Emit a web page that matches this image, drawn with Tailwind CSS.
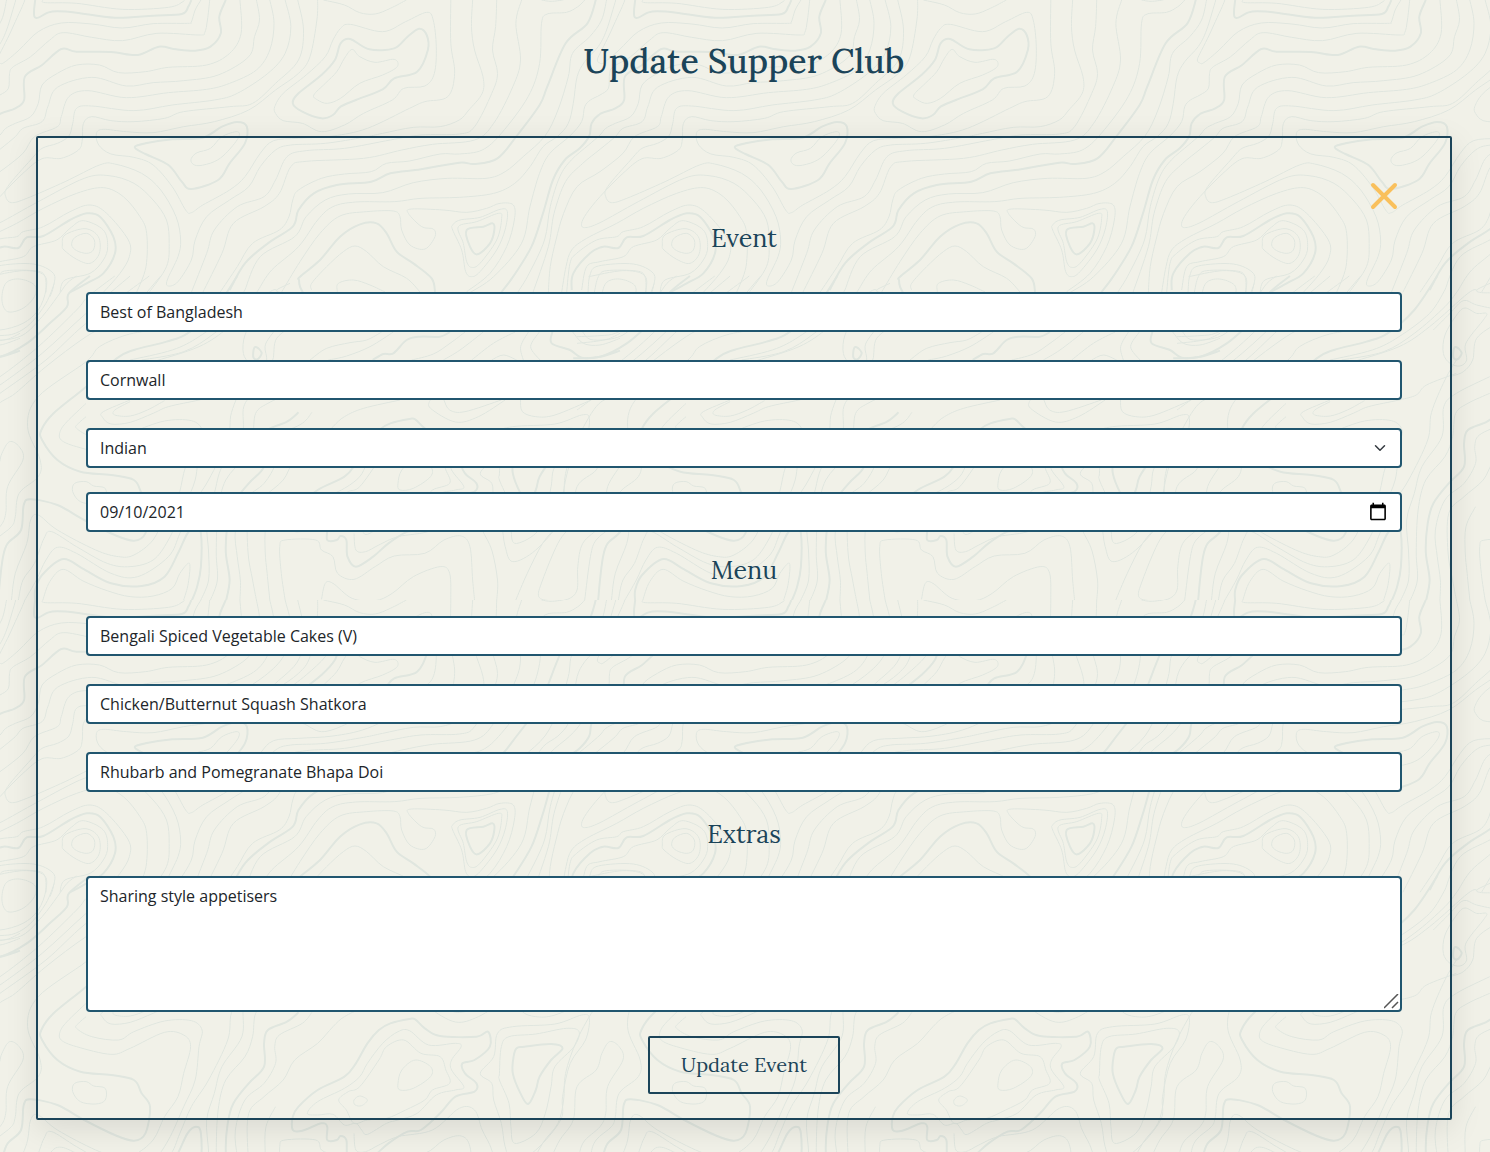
<!DOCTYPE html>
<html lang="en">
<head>
<meta charset="utf-8">
<meta name="viewport" content="width=device-width, initial-scale=1">
<title>Update Supper Club</title>
<script src="https://cdn.jsdelivr.net/npm/@tailwindcss/browser@4"></script>
</head>
<body class="relative min-h-screen bg-[#f1f1e8] font-['Open_Sans',sans-serif] text-base text-[#212529]">

<!-- Topographic contour background, repeated every 600px -->
<svg class="absolute inset-0 -z-0 h-full w-full" aria-hidden="true">
  <defs>
    <pattern id="topo" width="600" height="600" patternUnits="userSpaceOnUse">
      <g id="tile" fill="none" stroke="#e0e6df"></g>
      <use href="#tile" x="600"/>
      <use href="#tile" x="-600"/>
    </pattern>
  </defs>
  <rect width="100%" height="100%" fill="url(#topo)"/>
</svg>

<main class="relative flex flex-col pb-8 pl-9 pr-[38px] pt-9">
  <h1 class="text-center font-['Lora','Liberation_Serif',serif] text-[34px] font-medium leading-[50px] text-[#1b4459]">Update Supper Club</h1>

  <form class="mt-[50px] flex flex-col rounded-xs border-2 border-[#1b4459] px-12 pb-6 pt-10 shadow-[0_8px_32px_rgba(0,0,0,0.1)]">
    <a href="#" aria-label="Close" class="mr-1 self-end">
      <svg class="size-7 m-1 mr-0" viewBox="0 0 28 28" fill="none" stroke="#f9c05c" stroke-width="4" stroke-linecap="round"><path d="M3 3l22 22M25 3L3 25"/></svg>
    </a>
    <h2 class="mt-1.5 text-center font-['Lora','Liberation_Serif',serif] text-[25px] leading-9 text-[#1b4459]">Event</h2>

    <div class="mt-9 flex flex-col gap-7">
      <input type="text" aria-label="Event name" value="Best of Bangladesh" class="h-10 w-full rounded border-2 border-[#21566f] bg-white px-3">
      <input type="text" aria-label="Location" value="Cornwall" class="h-10 w-full rounded border-2 border-[#21566f] bg-white px-3">
      <div class="relative flex">
        <select aria-label="Cuisine" class="h-10 w-full appearance-none rounded border-2 border-[#21566f] bg-white px-3"><option>Indian</option></select>
        <svg class="pointer-events-none absolute right-4 top-3.5 size-3" viewBox="0 0 16 16" fill="none" stroke="#343a40" stroke-width="2" stroke-linecap="round" stroke-linejoin="round" aria-hidden="true"><path d="M2 5l6 6 6-6"/></svg>
      </div>
    </div>
    <input type="date" aria-label="Date" value="2021-09-10" class="mt-6 h-10 w-full rounded border-2 border-[#21566f] bg-white px-3 [&::-webkit-calendar-picker-indicator]:size-5 [&::-webkit-calendar-picker-indicator]:p-0 [&::-webkit-datetime-edit-day-field]:p-0 [&::-webkit-datetime-edit-month-field]:p-0 [&::-webkit-datetime-edit-year-field]:p-0">

    <h2 class="mt-5 text-center font-['Lora','Liberation_Serif',serif] text-[25px] leading-9 text-[#1b4459]">Menu</h2>
    <div class="mt-7 flex flex-col gap-7">
      <input type="text" aria-label="Starter" value="Bengali Spiced Vegetable Cakes (V)" class="h-10 w-full rounded border-2 border-[#21566f] bg-white px-3">
      <input type="text" aria-label="Main" value="Chicken/Butternut Squash Shatkora" class="h-10 w-full rounded border-2 border-[#21566f] bg-white px-3">
      <input type="text" aria-label="Dessert" value="Rhubarb and Pomegranate Bhapa Doi" class="h-10 w-full rounded border-2 border-[#21566f] bg-white px-3">
    </div>

    <h2 class="mt-6 text-center font-['Lora','Liberation_Serif',serif] text-[25px] leading-9 text-[#1b4459]">Extras</h2>
    <div class="relative mt-6 flex">
      <textarea aria-label="Extras" class="h-34 w-full rounded border-2 border-[#21566f] bg-white px-3 py-1.5 [&::-webkit-resizer]:bg-transparent">Sharing style appetisers</textarea>
      <svg class="pointer-events-none absolute bottom-0.5 right-0.5 size-4" viewBox="0 0 16 16" fill="none" stroke="#555" stroke-width="1.5" aria-hidden="true"><path d="M0 14L14 0M8 14l6-6"/></svg>
    </div>

    <button type="submit" class="mt-6 h-[58px] w-48 self-center rounded-xs border-2 border-[#1b4459] font-['Lora','Liberation_Serif',serif] text-xl text-[#1b4459]">Update Event</button>
  </form>
</main>

<script>
// Contour lines: each group has its origin and axis divisors; "T" marks an index (bold) line, "z" a closed one.
const contours = [
 {x:0, y:0, sx:2.613, sy:3, lines:`
T 92,0 89,30 90,50 100,53 125,38 150,34 200,38 300,53 400,47 475,42 492,20 500,0
t 112,0 118,8 200,10 320,28 440,22 478,5 480,0
t 525,0 510,30 500,66 490,70 400,71 320,84 240,72 160,69 100,95 50,150 10,188 -2,188 -7,180 0,160 20,115 40,65 58,20 65,0
t 548,0 542,60 535,98 520,105 410,100 320,122 240,112 165,98 130,120 80,170 35,200 25,220 22,265 0,285 -25,300 -40,320 -48,365 -79,408 -131,460 -158,520 -183,620 -205,730 -278,830 -343,880
T 1558,-5 1535,70 1478,130 1430,260 1410,315 1350,408 1300,475 1240,492 1200,488 1100,508 1020,520 970,545 880,555 820,580 780,630 765,680 700,730 640,790 600,870
t 1585,0 1572,60 1541,110 1496,160 1485,230 1458,330 1424,408 1367,470 1320,515 1270,535 1170,535 1080,548 1000,578 910,582 850,600 800,650 770,710 680,770 640,870
t 1609,0 1585,90 1563,140 1528,185 1508,230 1498,310 1485,370 1458,408 1419,440 1385,500 1345,550 1290,580 1200,592 1100,595 1030,605 930,606 870,620 830,660 780,740 710,810 675,870
T 590,0 573,50 577,100 550,140 510,152 460,148 415,140 360,165 290,156 200,155 160,147 110,195 65,230 63,300 40,325 0,342 -22,370 -28,408 -53,445 -92,480 -123,540 -149,640 -179,740 -227,830 -258,877
t 627,0 630,100 600,160 540,195 440,202 380,215 310,218 260,195 200,195 150,220 110,255 100,310 80,350 40,370 15,385 0,405 -30,435 -75,480 -105,530 -130,620 -145,720 -185,820 -215,877
t 670,0 678,60 665,110 650,170 570,225 480,242 400,248 330,258 240,232 150,262 125,320 110,365 60,385 40,410 0,448 -45,490 -90,545 -120,640 -135,740 -175,877
t 705,0 716,70 705,150 670,210 600,250 540,268 440,278 330,293 230,272 180,290 160,350 150,380 90,410 60,460 0,515 -60,560 -95,640 -115,720 -130,800 -135,877
t 745,0 760,80 745,160 700,220 620,280 560,300 450,315 350,332 240,318 200,325 190,370 180,408 150,430 110,445 80,480 20,560 15,590 30,608 70,595 170,545 260,495 300,492 370,520 420,570 460,650 472,720 465,770 437,840 440,858 465,845 500,780 510,720 540,650 600,600 650,560 680,500 720,450 760,435 850,430 950,412 1000,400 1080,382 1150,380 1200,360 1225,330 1260,280 1262,230 1240,150 1232,80 1235,0
t 778,0 793,90 780,180 720,250 660,310 600,320 480,335 430,355 350,365 290,362 240,350 218,370 215,420 205,450 160,475 110,476 60,520 0,590 -35,640 -48,670 -40,683 0,668 100,605 220,535 285,527 350,550 400,600 435,660 442,730 435,800 390,877
t 830,0 828,60 810,170 780,220 720,270 650,330 560,365 480,380 400,398 330,395 270,388 252,400 258,435 290,462 350,472 400,495 450,560 485,630 500,638 530,615 600,570 640,530 680,460 715,422 780,415 870,408 960,385 1070,325 1110,305 1170,290 1188,220 1178,130 1178,0
tz 720,340 718,320 740,280 800,225 850,170 870,120 890,85 915,73 1000,95 1060,65 1115,37 1132,60 1140,140 1135,220 1110,258 1055,265 1025,300 950,340 900,375 840,395 790,370 740,362
Tz 765,310 780,280 840,225 875,180 890,130 915,117 965,148 1030,145 1065,110 1095,86 1115,105 1118,150 1090,215 1030,235 1000,268 930,300 890,320 870,345 840,355 790,335
tz 820,285 850,250 880,215 900,175 920,148 940,170 980,187 1030,178 1038,200 1000,225 940,250 890,295 855,310 830,300
t 845,0 900,15 940,38 980,42 1020,25 1062,0
t 1298,0 1295,80 1287,150 1300,220 1285,280 1240,380 1200,402 1100,405 1020,420 900,445 800,452 750,470 720,540 690,590 620,620 560,690 540,760 500,877
t 1363,0 1348,70 1360,180 1340,260 1290,370 1240,420 1130,433 1050,450 950,475 800,484 760,500 730,580 690,620 610,670 580,760 530,877
t 1528,0 1510,20 1480,37 1430,42 1415,70 1410,190 1380,290 1310,400 1260,450 1200,462 1150,462 1070,483 1010,490 970,515 900,522 840,535 780,570 765,600 755,650 730,690 660,730 620,800 575,877
t 1415,0 1440,4 1472,0
Tz 352,442 380,430 450,418 530,413 580,380 620,366 645,380 640,430 600,490 570,540 500,567 475,545 440,495 380,462
tz 500,475 515,458 550,445 580,410 620,395 622,415 590,460 560,485 520,497 502,490
`},
 {x:-110, y:0, sx:3, sy:3, lines:`
tz 545,735 555,712 590,700 613,720 610,750 590,760 560,752
tz 517,735 525,705 585,686 625,710 628,760 600,790 560,778 522,750
t 510,877 525,840 600,820 640,780 653,740 640,690 580,662 540,685 500,720 430,740 400,770 330,785 290,800 275,870
T 245,870 250,820 300,760 340,740 385,744 410,712 460,708 540,660 590,640 630,650 670,710 675,760 640,820 590,850 540,877
t 313,877 325,830 350,812 440,813 465,830 468,877
t 294,877 300,825 325,798 430,792 490,820 490,860 480,890
t 230,877 240,790 260,760 320,720 380,710 400,695 460,680 540,635 600,615 650,640 715,720 718,770 690,820 640,877
t 215,877 228,800 245,750 290,715 380,670 460,625 560,580 640,563 700,590 750,650 770,700 768,800 740,877
`},
 {x:300, y:130, sx:3, sy:3, lines:`
t -55,486 0,395 60,310 120,258 200,245 280,243 300,260 305,300 330,345 375,357 405,320 400,297 365,290 325,250 335,237 430,240 500,247 560,235 600,220 640,225 643,270 620,350 570,430 500,485
tz 458,285 480,270 540,262 600,238 622,245 615,300 590,360 540,425 515,440 497,425 485,360 458,300
tz 475,290 530,275 595,250 605,265 590,330 540,400 515,412 500,395 490,340
Tz 500,300 550,290 578,280 583,300 570,340 532,373 510,350
T 10,490 0,470 -3,450 0,440 60,390 120,320 180,283 230,280 260,310 290,365 340,400 395,445 405,486
t 35,480 35,460 80,410 130,365 165,348 200,365 250,410 320,445 360,486
t 112,486 115,460 160,450 210,465 255,486
t 30,690 80,655 150,638 200,630 245,606
t 85,690 140,678 210,650 280,606
T 218,690 250,672 280,670 320,630 360,620 420,620 450,606
t 335,690 400,672 450,640 495,606
t 430,690 480,660 550,606
t 515,690 580,640 645,606
t 575,690 610,675 650,690
t 670,690 662,650 685,606
t 720,690 692,650 718,606
T 757,606 755,640 810,660 845,683 900,680 960,662
t 818,606 850,640 900,645 960,625
t 848,606 870,628 920,628 960,610
`},
 {x:0, y:180, sx:2.613, sy:3, lines:`
T 620,288 560,390 490,460 435,485 350,510 305,535 225,620 140,700 108,750 110,780 150,840 210,875 290,885 350,900 370,940 392,980 380,1060 350,1082 300,1065 220,1020 150,975 80,958 62,975 55,1050 20,1090 8,1130 0,1200 -5,1265
tz 190,935 195,910 225,905 245,918 275,925 275,960 250,972 210,965
t 225,670 175,725 157,755 160,780 200,800 290,823 340,805 430,757 480,765 498,800 480,880 465,950 430,1010 400,1080 350,1125 310,1130 250,1110 150,1050 100,1005 80,1020 70,1090 40,1180 30,1260
t 225,710 205,730 200,745 240,770 310,780 350,755 430,723 500,722 528,750 520,800 510,900 480,980 440,1080 400,1140 340,1160 280,1150 200,1100 135,1055 115,1075 90,1150 60,1200 48,1260
t 340,660 270,695 268,712 290,732 340,727 400,700 440,680 520,660 565,645 592,615 670,580
t 340,665 300,690 300,705 340,708 385,690 430,662
t 670,540 640,600 605,697 595,780 545,900 500,980 470,1060 440,1130 360,1190 290,1180 200,1120 150,1102 120,1140 95,1200 65,1260
t 757,590 670,640 637,680 632,770 580,860 560,940 540,1020 545,1116 545,1200 525,1260
t 757,640 700,670 668,700 660,770 640,830 590,900 570,990 565,1116 568,1200 550,1260
T 780,697 750,725 700,750 690,790 690,860 650,910 610,970 595,1030 590,1116 600,1200 590,1265
t 815,697 790,730 730,765 718,800 720,850 690,910 640,960 615,1050 620,1130 628,1200 627,1260
t 1045,660 950,685 900,710 870,740 830,790 770,840 740,900 690,950 650,1000 648,1116 660,1200 670,1260
T 92,1265 92,1230 110,1185 165,1137 215,1165 290,1210 370,1218 430,1190 465,1120 490,1060 512,1040 525,1060 525,1160 515,1220 500,1265
t 112,1260 130,1205 165,1168 217,1203 280,1232 340,1250 400,1248 450,1225 470,1180 495,1150 492,1210 480,1260
t 745,1260 735,1180 731,1100 745,1080 825,1080 840,1110 870,1130 882,1180 925,1198 980,1160 1030,1128 1110,1120 1160,1080 1205,1068 1228,1100 1235,1200 1240,1260
t 705,1260 698,1180 693,1116 695,1040 720,980
t 840,1258 850,1210 870,1210 920,1255 980,1262 1025,1240 1080,1190 1150,1160 1175,1180 1178,1260
Tz 1070,717 1020,730 990,750 960,790 930,850 900,890 830,930 780,980 765,1010 765,1050 790,1052 840,1030 855,1040 855,1080 880,1080 890,1068 905,1080 908,1130 930,1160 975,1130 1015,1090 1065,1055 1100,1050 1150,1000 1190,950 1240,935 1245,910 1215,880 1208,850 1240,840 1280,800 1275,755 1245,770 1150,768 1110,745 1085,718
tz 803,1000 830,965 900,925 940,890 960,850 1000,790 1040,755 1070,752 1120,795 1190,790 1205,800 1180,840 1180,870 1212,920 1190,930 1140,945 1090,1000 1040,1020 1010,1030 960,1063 945,1050 930,1030 900,1035 870,1003 830,1005
tz 885,960 910,935 940,920 990,840 1010,800 1055,780 1100,820 1150,830 1165,870 1175,910 1130,930 1110,960 1060,990 1010,1015 960,1020 925,1030 905,990
tz 1040,910 1050,870 1085,840 1125,860 1125,890 1080,925 1045,930
tz 925,960 940,948 960,960 945,977 928,975
t 925,1060 930,1110 955,1115 990,1095 1040,1070 1130,1050 1200,985 1240,990 1260,1050 1285,1110 1300,1200 1298,1260
Tz 1350,805 1370,800 1440,792 1470,805 1440,840 1410,890 1400,930 1380,972 1360,940 1340,880 1342,830
tz 1305,880 1310,800 1330,770 1400,762 1480,745 1513,755 1500,800 1450,860 1440,920 1425,1000 1400,1060 1345,1090 1335,1040 1330,970 1305,900
tz 1255,880 1290,830 1300,760 1340,740 1450,732 1520,705 1540,715 1530,780 1490,850 1470,950 1465,1020 1400,1110 1340,1145 1320,1100 1310,1030 1290,960 1285,910
t 1124,660 1125,685 1190,726 1250,710 1320,660
t 1160,660 1175,690 1215,695 1310,660
t 1360,660 1365,695 1400,710 1450,705 1545,660
tz 15,1000 0,1040 -45,1090 -58,1160 -60,1230 -85,1258 -128,1262 -160,1250 -150,1200 -110,1090 -70,1020 -60,920 -10,870 5,820 25,785 50,800 60,840 20,920
t 400,450 330,465 260,500 225,545 100,650 72,740 105,840 100,890 50,940 40,1010 30,1040 -10,1080 -25,1130 -40,1260
t -220,1260 -190,1180 -150,1090 -110,1030 -95,960 -90,880 -60,780 -10,680 40,640 120,560 225,470 330,400 420,288
tz 5,360 15,310 50,297 90,315 90,350 60,385 20,395
t -30,290 60,272 115,285 120,330 100,390 60,430 0,450 -40,440
t 142,310 120,370 80,430 40,460 0,467 -60,470
t 200,288 175,310 150,350 110,410 60,465 0,482 -60,490
T 235,288 180,340 175,380 130,430 70,490 0,530 -70,535
t -60,625 0,590 100,500 200,390 230,350 300,288
t -60,655 0,615 110,520 225,400 340,288
t -60,690 0,640 120,540 225,430 390,288
t 340,540 450,510 520,470 600,400 640,330
t 370,540 480,515 560,460 640,380 675,330
t 400,545 520,500 600,440 700,340 725,330
`},
 {x:90, y:280, sx:3, sy:3, lines:`
Tz 492,205 502,203 515,220 502,238 490,232
tz 460,220 465,165 500,105 525,84 560,100 590,100 580,120 540,170 525,200 530,240 510,258 480,250
t 430,150 480,100 520,62 560,75 620,88
t 620,130 560,175 548,240 520,275 480,290
t 600,10 560,30 575,38 620,38
`}];
const NS = 'http://www.w3.org/2000/svg', tile = document.getElementById('tile');
for (const g of contours) for (const row of g.lines.trim().split('\n')) {
  const [kind, ...rest] = row.trim().split(/\s+/), closed = kind.endsWith('z');
  const p = rest.map(s => { const [a, b] = s.split(','); return [g.x + a / g.sx, g.y + b / g.sy]; });
  const n = p.length, at = i => closed ? p[(i + n) % n] : p[Math.max(0, Math.min(n - 1, i))];
  let d = `M${p[0]}`;
  for (let i = 0; i < (closed ? n : n - 1); i++) {
    const [a, b, c, e] = [at(i - 1), at(i), at(i + 1), at(i + 2)];
    d += `C${b[0] + (c[0] - a[0]) / 6} ${b[1] + (c[1] - a[1]) / 6} ${c[0] - (e[0] - b[0]) / 6} ${c[1] - (e[1] - b[1]) / 6} ${c}`;
  }
  const path = document.createElementNS(NS, 'path');
  path.setAttribute('d', d);
  path.setAttribute('stroke-width', kind[0] === 'T' ? 2 : 1);
  tile.append(path);
}
</script>
</body>
</html>
